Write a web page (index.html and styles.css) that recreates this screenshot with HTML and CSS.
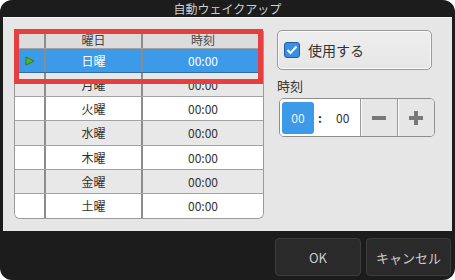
FILE: index.html
```html
<!DOCTYPE html>
<html lang="ja">
<head>
<meta charset="utf-8">
<link rel="stylesheet" href="styles.css">
</head>
<body>
<div class="window">
  <div class="title">自動ウェイクアップ</div>
  <div class="panel">
    <div class="table">
      <div class="row head"><div class="c0"></div><div class="c1">曜日</div><div class="c2">時刻</div></div>
      <div class="row sel"><div class="c0"><svg width="10" height="10" viewBox="0 0 10 10"><polygon points="1,1 9,5 1,9" fill="#52b52a" stroke="#2f7d18" stroke-width="1"/></svg></div><div class="c1">日曜</div><div class="c2">00:00</div></div>
      <div class="row alt"><div class="c0"></div><div class="c1">月曜</div><div class="c2">00:00</div></div>
      <div class="row"><div class="c0"></div><div class="c1">火曜</div><div class="c2">00:00</div></div>
      <div class="row alt"><div class="c0"></div><div class="c1">水曜</div><div class="c2">00:00</div></div>
      <div class="row"><div class="c0"></div><div class="c1">木曜</div><div class="c2">00:00</div></div>
      <div class="row alt"><div class="c0"></div><div class="c1">金曜</div><div class="c2">00:00</div></div>
      <div class="row last"><div class="c0"></div><div class="c1">土曜</div><div class="c2">00:00</div></div>
    </div>
    <div class="side">
      <div class="card">
        <span class="check"><svg width="12" height="10" viewBox="0 0 12 10"><polyline points="1.5,5 4.5,8 10.5,1.5" fill="none" stroke="#fff" stroke-width="2"/></svg></span>
        <span class="card-label">使用する</span>
      </div>
      <div class="label">時刻</div>
      <div class="timer">
        <div class="field">
          <span class="hh">00</span>
          <span class="colon">:</span>
          <span class="mm">00</span>
        </div>
        <div class="btn"><span class="minus"></span></div>
        <div class="btn"><span class="plus"></span></div>
      </div>
    </div>
    <div class="highlight"></div>
  </div>
  <div class="footer">
    <div class="fbtn ok">OK</div>
    <div class="fbtn cancel">キャンセル</div>
  </div>
</div>
</body>
</html>
```
FILE: styles.css
```css
html, body {
  margin: 0;
  padding: 0;
  background: #ffffff;
}
body {
  font-family: "Noto Sans CJK JP", "Noto Sans", sans-serif;
}
.window {
  width: 455px;
  height: 280px;
  background: #1c1c1c;
  border-radius: 12px;
  overflow: hidden;
  display: flex;
  flex-direction: column;
}
.title {
  height: 17px;
  line-height: 18px;
  text-align: center;
  color: #cfcfcf;
  font-size: 12px;
}
.panel {
  position: relative;
  margin: 0 3px;
  height: 214px;
  background: #e6e6e6;
  border-top: 1px solid #f4f4f4;
  box-sizing: border-box;
  display: flex;
  padding: 12px 0 0 11px;
  gap: 13px;
}
.table {
  margin-top: 1px;
  width: 250px;
  height: 188px;
  box-sizing: border-box;
  border: 1px solid #9a9a9a;
  border-top: none;
  border-radius: 0 0 6px 6px;
  overflow: hidden;
  background: #fff;
  display: flex;
  flex-direction: column;
}
.row {
  display: flex;
  height: 24.3px;
  box-sizing: border-box;
  border-bottom: 1px solid #a2a2a2;
  font-size: 12px;
  color: #333;
  background: #ffffff;
}
.row.last { border-bottom: none; }
.row.head {
  height: 18px;
  background: #dcdcdc;
  color: #444;
}
.row.alt { background: #e8e8e8; }
.row.sel {
  background: #3c9ae8;
  color: #fff;
  border-bottom: 1px solid #2c6ea8;
}
.row > div {
  display: flex;
  align-items: center;
  justify-content: center;
  box-sizing: border-box;
}
.c0 { width: 31px; border-right: 2px solid #8c8c8c; }
.c1 { width: 97px; border-right: 2px solid #8c8c8c; }
.c2 { flex: 1; }
.row.sel .c0 { justify-content: flex-start; padding-left: 10px; }
.side {
  width: 158px;
  display: flex;
  flex-direction: column;
}
.card {
  width: 155px;
  height: 40px;
  box-sizing: border-box;
  border: 1.5px solid #9a9a9a;
  border-radius: 5px;
  background: linear-gradient(#eeeeee, #e6e6e6);
  box-shadow: inset 0 0 0 1px #fafafa;
  display: flex;
  align-items: center;
  padding-left: 6px;
  gap: 8px;
}
.check {
  width: 16px;
  height: 16px;
  box-sizing: border-box;
  border-radius: 3px;
  background: #3a8fe2;
  border: 1px solid #1f5d9e;
  display: flex;
  align-items: center;
  justify-content: center;
}
.card-label {
  font-size: 14px;
  color: #333;
}
.label {
  margin-top: 7px;
  height: 18px;
  line-height: 18px;
  font-size: 13px;
  color: #333;
}
.timer {
  margin: 3px 0 0 2px;
  width: 156px;
  height: 39px;
  box-sizing: border-box;
  border: 1.5px solid #8e8e8e;
  border-radius: 5px;
  overflow: hidden;
  display: flex;
  background: #e8e8e8;
}
.field {
  width: 78px;
  background: #fff;
  display: flex;
  align-items: center;
  padding-left: 2px;
  font-size: 12px;
  color: #333;
}
.hh {
  width: 32px;
  height: 32px;
  border-radius: 3px;
  background: #3c9ae8;
  color: #e8f2fc;
  display: flex;
  align-items: center;
  justify-content: center;
}
.colon {
  width: 10px;
  text-align: center;
  font-weight: bold;
  margin-left: 1px;
}
.mm {
  margin-left: 11px;
}
.btn {
  flex: 1;
  border-left: 1.5px solid #9a9a9a;
  box-shadow: inset 1px 0 0 #fafafa;
  background: #e6e6e6;
  display: flex;
  align-items: center;
  justify-content: center;
  position: relative;
}
.minus {
  width: 14px;
  height: 4px;
  background: #787878;
}
.plus {
  width: 14px;
  height: 14px;
  background:
    linear-gradient(#787878, #787878) center / 14px 4px no-repeat,
    linear-gradient(#787878, #787878) center / 4px 14px no-repeat;
}
.highlight {
  position: absolute;
  left: 11px;
  top: 11px;
  width: 249px;
  height: 55px;
  box-sizing: border-box;
  border: 5px solid #e63f3f;
}
.footer {
  display: flex;
  justify-content: flex-end;
  gap: 5px;
  padding: 7px 4px 0 0;
}
.fbtn {
  height: 38px;
  box-sizing: border-box;
  border: 1px solid #3c3c3c;
  border-radius: 4px;
  background: #2a2a2a;
  color: #cccccc;
  font-size: 13px;
  display: flex;
  align-items: center;
  justify-content: center;
}
.ok { width: 86px; }
.cancel { width: 85px; }
```
